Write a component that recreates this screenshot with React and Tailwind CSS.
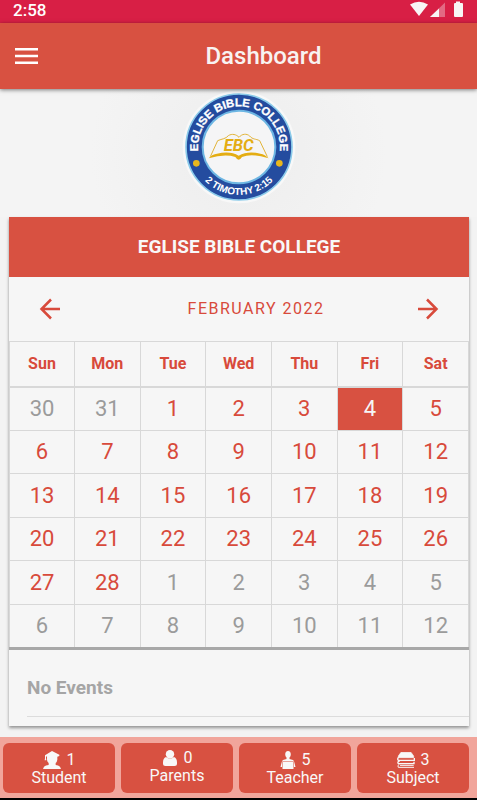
const weekdays = ["Sun", "Mon", "Tue", "Wed", "Thu", "Fri", "Sat"];

const weeks = [
  [30, 31, 1, 2, 3, 4, 5],
  [6, 7, 8, 9, 10, 11, 12],
  [13, 14, 15, 16, 17, 18, 19],
  [20, 21, 22, 23, 24, 25, 26],
  [27, 28, 1, 2, 3, 4, 5],
  [6, 7, 8, 9, 10, 11, 12],
];

function dayClass(week, day) {
  if (week === 0 && day === 4) return "bg-[#d85141] text-[#f6f6f6]";
  const outside = (week === 0 && day > 20) || (week > 3 && day < 20);
  return outside ? "text-[#9b9b9b]" : "text-[#d84a3b]";
}

function StatusBar() {
  return (
    <div className="flex h-[23px] items-start justify-between bg-[#d81f45] px-[13px] text-white">
      <span className="text-[17px] leading-5 font-medium">2:58</span>
      <svg className="mt-px h-[18px] w-[54px]" viewBox="0 0 54 18" fill="#f8f5f5" aria-hidden="true">
        <path d="M0 3.500Q9 -2 18 3.500L9 15Z" />
        <path d="M35 1.500V16H20Z" opacity=".35" />
        <path d="M29 7.500V16H20Z" />
        <path d="M46 .5h4v1.500h2q1 0 1 1V15q0 1-1 1h-7q-1 0-1-1V3q0-1 1-1h1Z" />
      </svg>
    </div>
  );
}

function Logo() {
  return (
    <svg className="size-[114px]" viewBox="67 16 342 342" role="img" aria-label="Eglise Bible College">
      <defs>
        <path id="arc-top" d="M117 210A123 123 0 1 1 359 210" />
        <path id="arc-bottom" d="M94 187A144 144 0 0 0 382 187" />
      </defs>
      <circle cx="238" cy="187" r="169" fill="#f8f8f8" />
      <circle cx="238" cy="187" r="159" fill="#244c9f" stroke="#8bcbea" strokeWidth="5" />
      <circle cx="238" cy="187" r="109" fill="#f5f5f6" stroke="#6db6e3" strokeWidth="6" />
      <g fill="#fff" textAnchor="middle" className="font-['Liberation_Sans',sans-serif] font-bold">
        <text fontSize="34" stroke="#fff" strokeWidth="1"><textPath href="#arc-top" startOffset="50%">EGLISE BIBLE COLLEGE</textPath></text>
        <text fontSize="30"><textPath href="#arc-bottom" startOffset="50%">2 TIMOTHY 2:15</textPath></text>
      </g>
      <circle cx="110" cy="236" r="10" fill="#e9b71c" />
      <circle cx="359" cy="236" r="10" fill="#e9b71c" />
      <path d="M152 216L174 168C188 162 198 163 206 153C217 146 230 149 238 158C247 147 261 146 270 154C279 165 288 162 300 168L323 216" fill="none" stroke="#e2b439" strokeWidth="3" />
      <path d="M147 221Q158 208 172 207Q211 197 237 213Q265 197 302 207Q316 209 327 221Q276 205 247 217Q242 225 237 225Q232 225 227 217Q195 207 147 221Z" fill="#e4ad13" />
      <text x="237" y="198" textAnchor="middle" fontSize="50" fill="#e4ad13" className="font-['Roboto',sans-serif] font-bold italic">EBC</text>
    </svg>
  );
}

function StudentIcon() {
  return (
    <svg className="h-[18px] w-[18px]" viewBox="0 0 54 54" fill="currentColor" aria-hidden="true">
      <path d="M27 0L49 11V15L43 17V26Q42 33 38 36V42Q46 43 51 47L54 54H0L3 47Q8 43 17 42V36Q12 32 12 26V17L9 16V22L10 28H5L6 22V13Z" />
    </svg>
  );
}

function ParentIcon() {
  return (
    <svg className="h-[16px] w-[16px]" viewBox="0 0 16 16" fill="currentColor" aria-hidden="true">
      <circle cx="8" cy="4.200" r="4.200" />
      <path d="M4 7Q8 10 12 7Q15 8 15 12.500V13.500Q15 16 12.500 16H3.500Q1 16 1 13.500V12.500Q1 8 4 7Z" />
    </svg>
  );
}

function TeacherIcon() {
  return (
    <svg className="h-[18px] w-[16px]" viewBox="0 0 16 18" fill="currentColor" aria-hidden="true">
      <path d="M8 0Q10.800 0 10.800 3.500Q10.800 5.500 9.500 6.500V8L13 9Q14 9.500 14.500 12L15.500 16H.5L1.500 12Q2 9.500 3 9L6.500 8V6.500Q5.200 5.500 5.200 3.500Q5.200 0 8 0Z" />
      <path d="M2.500 10.500H13.500V18H2.500Z" />
      <path d="M2.500 16V10.500H13.500V16" fill="none" stroke="#d85141" strokeWidth=".5" />
    </svg>
  );
}

function SubjectIcon() {
  return (
    <svg className="h-[17px] w-[18px]" viewBox="0 0 54 51" fill="none" stroke="currentColor" aria-hidden="true">
      <path d="M12 1H42L50 12V17H4V12Z" fill="currentColor" strokeWidth="2" />
      <path d="M5 16Q0 20 4 25H52V18" strokeWidth="4" />
      <path d="M8 27Q0 29 4 35H51V29" strokeWidth="4" />
      <path d="M7 37Q0 40 4 46H51M9 40H50" strokeWidth="3" />
    </svg>
  );
}

const stats = [
  { label: "Student", count: 1, Icon: StudentIcon, align: "pt-2" },
  { label: "Parents", count: 0, Icon: ParentIcon, align: "pt-1.5" },
  { label: "Teacher", count: 5, Icon: TeacherIcon, align: "pt-2" },
  { label: "Subject", count: 3, Icon: SubjectIcon, align: "pt-2" },
];

function Arrow({ flip = false }) {
  return (
    <svg className={flip ? "size-6 rotate-180" : "size-6"} viewBox="0 0 24 24" fill="none" stroke="currentColor" strokeWidth="2.500" aria-hidden="true">
      <path d="M22 12H3.500M13 2.500L3.500 12L13 21.500" />
    </svg>
  );
}

export default function App() {
  return (
    <div className="flex min-h-screen flex-col bg-[#f3f3f3] font-[Roboto,sans-serif]">
      <StatusBar />
      <header className="relative flex h-[66px] items-center bg-[#d85141] text-white shadow-[0_1px_4px_rgba(0,0,0,0.5)]">
        <button type="button" aria-label="Open menu" className="flex w-[50px] justify-start pl-[15px]">
          <svg className="h-4 w-[23px]" viewBox="0 0 23 16" fill="currentColor" aria-hidden="true">
            <path d="M0 0H23V2.500H0ZM0 6.700H23V9.200H0ZM0 13.500H23V16H0Z" />
          </svg>
        </button>
        <h1 className="flex-1 text-center text-2xl font-medium text-[#f8f3f2]">Dashboard</h1>
      </header>

      <main className="flex flex-1 flex-col">
        <div className="flex h-32 items-start justify-center bg-[radial-gradient(circle,#ededed,#f4f4f4_60%)] pt-px">
          <Logo />
        </div>

        <section className="mr-2 ml-[9px] bg-[#f6f6f6] shadow-[0_2px_3px_rgba(0,0,0,0.4)]">
          <h2 className="flex h-[60px] items-center justify-center bg-[#d85141] text-[19px] font-bold text-[#f8f8f8]">
            EGLISE BIBLE COLLEGE
          </h2>
          <div className="flex h-16 items-center px-[29px] text-[#d84a3b]">
            <button type="button" aria-label="Previous month"><Arrow /></button>
            <span className="flex-1 pl-[34px] text-center text-base tracking-[1.500px]">FEBRUARY 2022</span>
            <button type="button" aria-label="Next month"><Arrow flip /></button>
          </div>
          <table className="w-full table-fixed border-collapse border-b-[3px] border-[#a8a8a8] text-center">
            <thead>
              <tr className="h-[45px]">
                {weekdays.map((day) => (
                  <th key={day} scope="col" className="border border-b-2 border-[#d8d8d8] text-base font-bold text-[#d84a3b] first:w-[65px]">{day}</th>
                ))}
              </tr>
            </thead>
            <tbody>
              {weeks.map((days, week) => (
                <tr key={week} className={week % 2 && week < 5 ? "h-[43px]" : "h-[44px]"}>
                  {days.map((day, i) => (
                    <td key={i} className={`border border-[#d8d8d8] text-[22px] leading-7 ${dayClass(week, day)}`}>{day}</td>
                  ))}
                </tr>
              ))}
            </tbody>
          </table>
          <div className="h-[76px] pt-6 pl-[18px]">
            <p className="h-[43px] border-b border-[#dcdcdc] text-[19px] leading-7 font-bold text-[#a5a5a5]">No Events</p>
          </div>
        </section>
      </main>

      <footer className="grid grid-cols-4 gap-1.5 border-b-2 border-black bg-[#f1a59b] pt-1.5 pr-2 pb-[5px] pl-[3px]">
        {stats.map(({ label, count, Icon, align }) => (
          <button key={label} type="button" className={`flex h-[50px] flex-col items-center justify-start rounded-md bg-[#d85141] text-base leading-[18px] text-[#f8f8f8] ${align}`}>
            <span className="flex items-center gap-1.5"><Icon />{count}</span>
            <span>{label}</span>
          </button>
        ))}
      </footer>
    </div>
  );
}
